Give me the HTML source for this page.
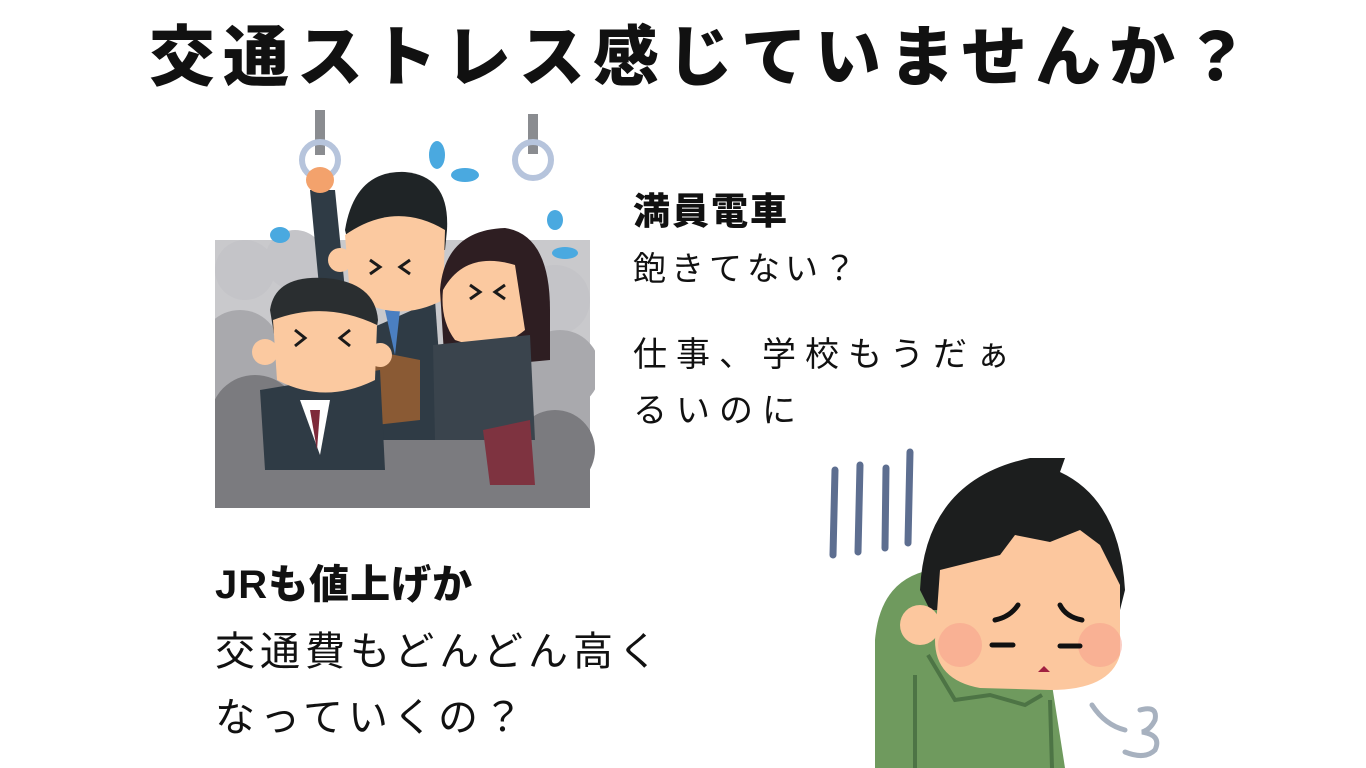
<!DOCTYPE html>
<html><head><meta charset="utf-8"><style>
html,body{margin:0;padding:0;background:#fff;}
body{width:1366px;height:768px;position:relative;overflow:hidden;font-family:"Liberation Sans","Noto Sans CJK JP",sans-serif;color:#111;}
.t{position:absolute;white-space:nowrap;line-height:1;}
h1{position:absolute;left:0;width:1366px;top:24px;margin:0;text-align:center;font-size:66px;font-weight:900;letter-spacing:8px;line-height:1;font-family:"Liberation Sans","Noto Sans CJK JP",sans-serif;padding-left:40px;box-sizing:border-box;}
</style></head><body>
<h1>交通ストレス感じていませんか？</h1>

<svg style="position:absolute;left:215px;top:110px" width="380" height="400" viewBox="0 0 380 400">
 <rect x="0" y="130" width="375" height="268" fill="#c9c9cc"/>
 <g fill="#c4c4c8"><circle cx="30" cy="160" r="30"/><circle cx="80" cy="150" r="30"/><circle cx="340" cy="190" r="35"/></g>
 <g fill="#a9a9ad"><circle cx="25" cy="240" r="40"/><circle cx="345" cy="260" r="40"/><rect x="0" y="240" width="375" height="158"/></g>
 <g fill="#7b7b7f"><circle cx="40" cy="310" r="45"/><circle cx="140" cy="320" r="40"/><circle cx="240" cy="330" r="45"/><circle cx="340" cy="340" r="40"/><rect x="0" y="320" width="375" height="78"/></g>
 <rect x="100" y="0" width="10" height="45" fill="#8a8c90"/><circle cx="105" cy="50" r="18" fill="none" stroke="#b6c4dc" stroke-width="6"/>
 <rect x="313" y="4" width="10" height="40" fill="#8a8c90"/><circle cx="318" cy="50" r="18" fill="none" stroke="#b6c4dc" stroke-width="6"/>
 <g fill="#4aa9e0"><ellipse cx="222" cy="45" rx="8" ry="14"/><ellipse cx="250" cy="65" rx="14" ry="7"/><ellipse cx="65" cy="125" rx="10" ry="8"/><ellipse cx="340" cy="110" rx="8" ry="10"/><ellipse cx="350" cy="143" rx="13" ry="6"/></g>
 <path d="M95 80 L120 80 L135 230 L110 240 Z" fill="#2f3b45"/><ellipse cx="105" cy="70" rx="14" ry="13" fill="#f3a26c"/>
 <path d="M130 230 L220 190 L230 330 L140 330 Z" fill="#2f3b45"/>
 <path d="M170 200 L185 200 L180 245 Z" fill="#4b7fc1"/>
 <path d="M130 120 Q140 60 190 62 Q235 66 232 120 L230 140 L135 140 Z" fill="#1f2426"/>
 <path d="M130 125 Q180 90 230 120 L228 190 Q180 215 135 185 Z" fill="#fbc9a0"/>
 <circle cx="125" cy="150" r="12" fill="#fbc9a0"/>
 <path d="M225 180 Q230 120 290 118 Q335 125 335 200 L335 250 L230 260 Z" fill="#2e1e22"/>
 <path d="M228 180 Q250 140 300 155 L310 220 Q280 245 240 230 Q225 210 228 180 Z" fill="#fbc9a0"/>
 <path d="M218 235 L315 225 L320 330 L220 330 Z" fill="#3a444d"/>
 <path d="M268 320 L315 310 L320 375 L275 375 Z" fill="#7e3340"/>
 <path d="M155 240 L205 250 L205 310 L160 315 Z" fill="#8a5a34"/>
 <path d="M45 280 L165 260 L170 360 L50 360 Z" fill="#2f3b45"/>
 <path d="M85 290 L115 290 L105 345 Z" fill="#fff"/><path d="M95 300 L105 300 L102 340 Z" fill="#7e2a3a"/>
 <path d="M55 200 Q60 165 110 168 Q160 172 163 210 L160 230 L60 230 Z" fill="#2a2e30"/>
 <path d="M58 210 Q110 190 162 215 L160 270 Q110 295 62 270 Z" fill="#fbc9a0"/>
 <circle cx="50" cy="242" r="13" fill="#fbc9a0"/><circle cx="165" cy="245" r="12" fill="#fbc9a0"/>
 <g stroke="#1a1a1a" stroke-width="3" fill="none"><path d="M80 220 l10 8 l-10 8"/><path d="M135 220 l-10 8 l10 8"/><path d="M155 150 l10 7 l-10 7"/><path d="M195 150 l-10 7 l10 7"/><path d="M255 175 l10 7 l-10 7"/><path d="M290 175 l-10 7 l10 7"/></g>
</svg>

<div class="t" style="left:633px;top:193px;font-size:37px;font-weight:900;letter-spacing:2px">満員電車</div>
<div class="t" style="left:633px;top:252px;font-size:33px;letter-spacing:5px">飽きてない？</div>
<div class="t" style="left:633px;top:338px;font-size:34px;letter-spacing:9px">仕事、学校もうだぁ</div>
<div class="t" style="left:633px;top:394px;font-size:34px;letter-spacing:9px">るいのに</div>

<div class="t" style="left:215px;top:565px;font-size:40px;font-weight:900;letter-spacing:1px">JRも値上げか</div>
<div class="t" style="left:215px;top:632px;font-size:40px;letter-spacing:5px">交通費もどんどん高く</div>
<div class="t" style="left:215px;top:698px;font-size:40px;letter-spacing:5px">なっていくの？</div>

<svg style="position:absolute;left:820px;top:440px" width="360" height="328" viewBox="0 0 360 328">
 <g stroke="#5d6e90" stroke-width="7" stroke-linecap="round"><line x1="15" y1="30" x2="13" y2="115"/><line x1="40" y1="25" x2="38" y2="112"/><line x1="66" y1="28" x2="65" y2="108"/><line x1="90" y1="12" x2="88" y2="103"/></g>
 <path d="M55 328 L55 200 Q60 140 110 130 L225 200 L245 328 Z" fill="#6f9a5e"/>
 <path d="M95 235 L95 328 M108 215 L135 260 L170 255 L205 265 L222 255 M230 260 L232 328" stroke="#4d7445" stroke-width="4" fill="none"/>
 <path d="M100 150 Q105 40 210 18 L245 18 L240 32 Q300 60 305 150 L300 170 L110 170 Z" fill="#1c1e1e"/>
 <path d="M120 130 L180 115 L195 95 L230 102 L260 90 L280 105 L300 145 L300 215 Q290 250 230 250 L160 248 Q115 240 115 200 Z" fill="#fcc79e"/>
 <circle cx="100" cy="185" r="20" fill="#fcc79e"/>
 <g fill="#f59b8a" opacity="0.5"><circle cx="140" cy="205" r="22"/><circle cx="280" cy="205" r="22"/></g>
 <g stroke="#111" stroke-width="5" stroke-linecap="round" fill="none"><path d="M175 180 Q190 177 198 165"/><path d="M240 165 Q246 177 262 180"/><line x1="172" y1="205" x2="193" y2="205"/><line x1="240" y1="206" x2="260" y2="206"/></g>
 <path d="M218 232 l6 -6 l6 6 Z" fill="#a02040"/>
 <path d="M272 265 Q285 285 305 290" stroke="#a7b1bf" stroke-width="5" fill="none" stroke-linecap="round"/>
 <path d="M320 270 Q338 265 335 280 Q330 290 322 292 Q342 295 335 310 Q325 320 305 312" stroke="#a7b1bf" stroke-width="5" fill="none" stroke-linecap="round"/>
</svg>
</body></html>
